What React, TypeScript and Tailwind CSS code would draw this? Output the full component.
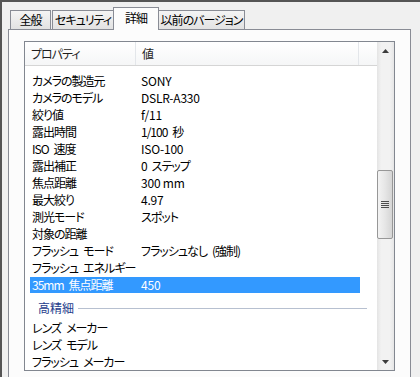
import React from "react";

const rows: [string, string][] = [
  ["カメラの製造元", "SONY"],
  ["カメラのモデル", "DSLR-A330"],
  ["絞り値", "f/11"],
  ["露出時間", "1/100 秒"],
  ["ISO 速度", "ISO-100"],
  ["露出補正", "0 ステップ"],
  ["焦点距離", "300 mm"],
  ["最大絞り", "4.97"],
  ["測光モード", "スポット"],
  ["対象の距離", ""],
  ["フラッシュ モード", "フラッシュなし (強制)"],
  ["フラッシュ エネルギー", ""],
  ["35mm 焦点距離", "450"],
];

const moreRows = ["レンズ メーカー", "レンズ モデル", "フラッシュ メーカー"];

// Japanese text gets tighter spacing to match the narrow kana of the original UI font
const hasKana = (s: string) => /[\u3040-\u30ff\u4e00-\u9fff]/.test(s);

// tight tracking squeezes spaces too much, so spaces are drawn as fixed gaps
function Spaced({ text }: { text: string }) {
  const parts = text.split(" ");
  return (
    <>
      {parts.map((p, i) => (
        <React.Fragment key={i}>
          {i > 0 && <span className="inline-block w-[5px]" />}
          {p}
        </React.Fragment>
      ))}
    </>
  );
}

function Row({ label, value, selected }: { label: string; value: string; selected?: boolean }) {
  return (
    <div className="h-[17px] ml-[5px] w-[330px]">
      <div
        className={
          "h-[16px] flex items-center leading-[16px] whitespace-nowrap " +
          (selected ? "bg-[#3399ff] text-white" : "text-black")
        }
      >
        <div className="w-[109px] pl-[2px] shrink-0 tracking-[-1px]">
          <Spaced text={label} />
        </div>
        <div className={"pl-[2px] " + (hasKana(value) ? "tracking-[-1px]" : "tracking-[-0.2px]")}>
          {hasKana(value) ? <Spaced text={value} /> : value}
        </div>
      </div>
    </div>
  );
}

function Arrow({ up }: { up?: boolean }) {
  return (
    <svg width="7" height="4" viewBox="0 0 7 4">
      {up ? <path d="M3.5 0 L7 4 L0 4 Z" fill="#3c3c3c" /> : <path d="M0 0 L7 0 L3.5 4 Z" fill="#3c3c3c" />}
    </svg>
  );
}

const tabBase =
  "h-[19px] border border-b-0 border-[#898c95] bg-[linear-gradient(#f4f4f4,#e2e2e2)] flex justify-center pt-[1px] leading-[16px] text-black whitespace-nowrap tracking-[-1px]";

export default function App() {
  return (
    <div className="w-[420px] h-[377px] overflow-hidden bg-[#f0f0f0] border-t-2 border-l-2 border-[#555] font-['Noto_Sans_CJK_JP',sans-serif] text-[12px] [font-feature-settings:'palt']">
      {/* tab strip */}
      <div className="h-[27px] flex items-end pl-[8px]">
        <div className={"w-[41px] " + tabBase}>全般</div>
        <div className={"ml-[1px] w-[61px] border-r-0 " + tabBase}>セキュリティ</div>
        <div className="relative z-10 -mb-px w-[46px] h-[23px] border border-b-0 border-[#898c95] bg-[#fcfcfc] flex justify-center pt-[2px] leading-[16px] text-black whitespace-nowrap tracking-[-1px]">
          詳細
        </div>
        <div className={"w-[86px] border-l-0 " + tabBase}>以前のバージョン</div>
      </div>

      {/* tab panel */}
      <div className="ml-[6px] w-[403px] h-[400px] border border-[#898c95] bg-[#fcfcfc] pt-[11px] pl-[15px]">
        <div className="w-[371px] h-[330px] border border-[#828790] bg-white flex">
          {/* list content */}
          <div className="w-[352px] flex flex-col overflow-hidden">
            <div className="h-[24px] shrink-0 flex border-b border-[#d5d5d5] bg-[linear-gradient(#ffffff,#f5f6f7)] text-[#1e1e1e] leading-[23px] tracking-[-1px]">
              <div className="w-[111px] pl-[6px] border-r border-[#e3e6ea]">プロパティ</div>
              <div className="w-[223px] pl-[6px] border-r border-[#e3e6ea]">値</div>
              <div className="flex-1" />
            </div>
            <div className="pt-[7px]">
              {rows.map(([l, v], i) => (
                <Row key={l} label={l} value={v} selected={i === rows.length - 1} />
              ))}
              <div className="h-[26px] flex items-start pt-[6px] pl-[13px] pr-[10px]">
                <span className="text-[#1e3c8c] leading-[16px] whitespace-nowrap">高精細</span>
                <div className="flex-1 ml-[4px] mt-[8px] h-px bg-[#b7c0d0]" />
              </div>
              {moreRows.map((l) => (
                <Row key={l} label={l} value="" />
              ))}
            </div>
          </div>

          {/* scrollbar */}
          <div className="w-[17px] ml-auto flex flex-col bg-[linear-gradient(to_right,#e4e4e4,#f2f2f2_25%,#f2f2f2_75%,#e6e6e6)]">
            <div className="h-[17px] flex items-center justify-center">
              <Arrow up />
            </div>
            <div className="flex-1 relative">
              <div className="absolute left-0 right-[1px] top-[111px] h-[69px] rounded-[2px] border border-[#979797] bg-[linear-gradient(to_right,#f3f3f3,#e6e6e6_50%,#d5d5d5)] flex flex-col items-center justify-center gap-[1px]">
                <div className="w-[8px] h-px bg-[#4d4d4d]" />
                <div className="w-[8px] h-px bg-[#4d4d4d]" />
                <div className="w-[8px] h-px bg-[#4d4d4d]" />
                <div className="w-[8px] h-px bg-[#4d4d4d]" />
              </div>
            </div>
            <div className="h-[17px] flex items-center justify-center">
              <Arrow />
            </div>
          </div>
        </div>
      </div>
    </div>
  );
}
